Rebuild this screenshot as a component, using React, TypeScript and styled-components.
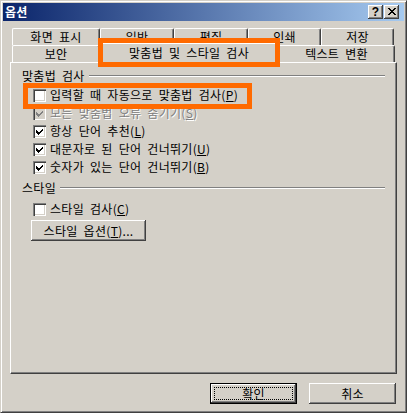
import React from 'react';
import styled, { createGlobalStyle } from 'styled-components';

const GlobalStyle = createGlobalStyle`
  html, body {
    margin: 0;
    padding: 0;
    background: #D4D0C8;
  }
  body {
    font-family: 'Noto Sans CJK KR', 'Noto Sans', sans-serif;
    font-size: 12px;
    color: #000;
    letter-spacing: 0.3px;
    word-spacing: 3px;
  }
`;

const Window = styled.div`
  position: relative;
  width: 407px;
  height: 413px;
  box-sizing: border-box;
  background: #D4D0C8;
  border: 1px solid;
  border-color: #D4D0C8 #404040 #404040 #D4D0C8;
  box-shadow: inset 1px 1px #fff, inset -1px -1px #808080;
  padding: 2px;
  display: flex;
  flex-direction: column;
`;

const TitleBar = styled.div`
  height: 18px;
  display: flex;
  align-items: center;
  padding: 0 5px 0 2px;
  background: linear-gradient(to right, #0A246A, #A6CAF0);
`;

const TitleText = styled.div`
  flex: 1;
  color: #fff;
  font-weight: bold;
  font-size: 12px;
  line-height: 18px;
`;

const CaptionButton = styled.div`
  width: 15px;
  height: 14px;
  box-sizing: border-box;
  margin-left: 1px;
  background: #D4D0C8;
  box-shadow: inset -1px -1px #404040, inset 1px 1px #fff, inset -2px -2px #808080;
  display: flex;
  align-items: center;
  justify-content: center;
  font-family: 'Liberation Sans', Arial, sans-serif;
  font-weight: bold;
  font-size: 12px;
  line-height: 14px;
  padding-bottom: 1px;
`;

const Body = styled.div`
  flex: 1;
  display: flex;
  flex-direction: column;
  padding: 7px 7px 6px;
`;

const TabStrip = styled.div`
  display: flex;
  flex-direction: column;
  margin-left: 2px;
`;

const TabRow = styled.div`
  display: flex;
  height: 17px;
`;

const Tab = styled.div<{ $w: number; $active?: boolean }>`
  width: ${p => p.$w + (p.$active ? 4 : 0)}px;
  height: ${p => (p.$active ? 20 : 17)}px;
  box-sizing: border-box;
  flex-shrink: 0;
  align-self: flex-end;
  margin: ${p => (p.$active ? '0 -2px -1px' : '0')};
  position: relative;
  z-index: ${p => (p.$active ? 2 : 1)};
  background: #D4D0C8;
  border-top: 1px solid #fff;
  border-left: 1px solid #fff;
  border-right: 1px solid #404040;
  box-shadow: inset -1px 0 #808080;
  border-radius: 2px 2px 0 0;
  text-align: center;
  font-size: 12px;
  line-height: ${p => (p.$active ? 17 : 16)}px;
  white-space: nowrap;
`;

const Panel = styled.div`
  height: 312px;
  box-sizing: border-box;
  border: 1px solid;
  border-color: #fff #404040 #404040 #fff;
  box-shadow: inset -1px -1px #808080;
  padding: 6px 11px 0 11px;
  display: flex;
  flex-direction: column;
`;

const GroupHeader = styled.div<{ $top: number }>`
  display: flex;
  align-items: center;
  height: 14px;
  line-height: 14px;
  margin-top: ${p => p.$top}px;
`;

const GroupLine = styled.div`
  flex: 1;
  margin-left: 4px;
  border-top: 1px solid #808080;
  border-bottom: 1px solid #fff;
`;

const GroupBody = styled.div<{ $top: number }>`
  display: flex;
  flex-direction: column;
  align-items: flex-start;
  margin-top: ${p => p.$top}px;
  padding-left: 10px;
`;

const CheckRow = styled.div<{ $disabled?: boolean }>`
  display: flex;
  align-items: center;
  height: 18px;
  padding-left: 1px;
  color: ${p => (p.$disabled ? '#808080' : '#000')};
  text-shadow: ${p => (p.$disabled ? '1px 1px #fff' : 'none')};
`;

const Box = styled.div<{ $disabled?: boolean }>`
  width: 13px;
  height: 13px;
  box-sizing: border-box;
  background: ${p => (p.$disabled ? '#D4D0C8' : '#fff')};
  box-shadow: inset 1px 1px #808080, inset 2px 2px #404040,
    inset -1px -1px #fff, inset -2px -2px #D4D0C8;
  display: flex;
  align-items: center;
  justify-content: center;
`;

const CheckLabel = styled.span`
  margin-left: 4px;
  line-height: 18px;
  white-space: nowrap;
`;

const PushButton = styled.button<{ $w: number; $default?: boolean }>`
  position: relative;
  width: ${p => p.$w}px;
  height: 21px;
  box-sizing: border-box;
  padding: 0;
  margin: 0;
  background: #D4D0C8;
  border: ${p => (p.$default ? '1px solid #000' : 'none')};
  box-shadow: inset -1px -1px #404040, inset 1px 1px #fff, inset -2px -2px #808080;
  font-family: 'Noto Sans CJK KR', 'Noto Sans', sans-serif;
  font-size: 12px;
  letter-spacing: 0.3px;
  word-spacing: 3px;
  line-height: 19px;
  color: #000;
  text-align: center;
  &::after {
    content: '';
    display: ${p => (p.$default ? 'block' : 'none')};
    position: absolute;
    left: 3px;
    top: 3px;
    right: 3px;
    bottom: 3px;
    border: 1px dotted #000;
  }
`;

const StyleButton = styled(PushButton)`
  margin-top: 2px;
  margin-left: -1px;
`;

const ButtonRow = styled.div`
  display: flex;
  justify-content: flex-end;
  gap: 12px;
  margin-top: 9px;
  padding-right: 1px;
`;

const Highlight = styled.div<{ $x: number; $y: number; $w: number; $h: number }>`
  position: absolute;
  left: ${p => p.$x}px;
  top: ${p => p.$y}px;
  width: ${p => p.$w}px;
  height: ${p => p.$h}px;
  box-sizing: border-box;
  border: 5px solid #FF6A00;
  z-index: 10;
`;

const Check = ({ color = '#000' }: { color?: string }) => (
  <svg width="7" height="7" viewBox="0 0 7 7" shapeRendering="crispEdges">
    <path d="M0 2 L2.5 4.5 L7 0 L7 2.5 L2.5 7 L0 4.5 Z" fill={color} />
  </svg>
);

const closeRows = [
  [0, 6], [1, 5], [2, 4], [3, 3], [2, 4], [1, 5], [0, 6],
];

const CloseGlyph = () => (
  <svg width="8" height="7" viewBox="0 0 8 7" shapeRendering="crispEdges">
    {closeRows.map(([a, b], y) => (
      <g key={y}>
        <rect x={a} y={y} width={2} height={1} fill="#000" />
        <rect x={b} y={y} width={2} height={1} fill="#000" />
      </g>
    ))}
  </svg>
);

const Checkbox = ({ checked, disabled, children }: { checked?: boolean; disabled?: boolean; children: React.ReactNode }) => (
  <CheckRow $disabled={disabled}>
    <Box $disabled={disabled}>{checked && <Check color={disabled ? '#808080' : '#000'} />}</Box>
    <CheckLabel>{children}</CheckLabel>
  </CheckRow>
);

const backTabs = [
  { label: '화면 표시', w: 88 },
  { label: '일반', w: 74 },
  { label: '편집', w: 74 },
  { label: '인쇄', w: 73 },
  { label: '저장', w: 73 },
];

const frontTabs = [
  { label: '보안', w: 88 },
  { label: '맞춤법 및 스타일 검사', w: 178, active: true },
  { label: '텍스트 변환', w: 117 },
];

const App = () => {
  return (
    <>
      <GlobalStyle />
      <Window>
        <TitleBar>
          <TitleText>옵션</TitleText>
          <CaptionButton>?</CaptionButton>
          <CaptionButton><CloseGlyph /></CaptionButton>
        </TitleBar>

        <Body>
          <TabStrip>
            <TabRow>
              {backTabs.map(t => <Tab key={t.label} $w={t.w}>{t.label}</Tab>)}
            </TabRow>
            <TabRow>
              {frontTabs.map(t => <Tab key={t.label} $w={t.w} $active={t.active}>{t.label}</Tab>)}
            </TabRow>
          </TabStrip>

          <Panel>
            <GroupHeader $top={0}>맞춤법 검사<GroupLine /></GroupHeader>
            <GroupBody $top={3}>
              <Checkbox>입력할 때 자동으로 맞춤법 검사(<u>P</u>)</Checkbox>
              <Checkbox checked disabled>모든 맞춤법 오류 숨기기(<u>S</u>)</Checkbox>
              <Checkbox checked>항상 단어 추천(<u>L</u>)</Checkbox>
              <Checkbox checked>대문자로 된 단어 건너뛰기(<u>U</u>)</Checkbox>
              <Checkbox checked>숫자가 있는 단어 건너뛰기(<u>B</u>)</Checkbox>
            </GroupBody>

            <GroupHeader $top={5}>스타일<GroupLine /></GroupHeader>
            <GroupBody $top={5}>
              <Checkbox>스타일 검사(<u>C</u>)</Checkbox>
              <StyleButton $w={115}>스타일 옵션(<u>T</u>)...</StyleButton>
            </GroupBody>
          </Panel>

          <ButtonRow>
            <PushButton $w={87} $default>확인</PushButton>
            <PushButton $w={87}>취소</PushButton>
          </ButtonRow>
        </Body>

        <Highlight $x={97} $y={37} $w={182} $h={29} />
        <Highlight $x={22} $y={82} $w={229} $h={26} />
      </Window>
    </>
  );
};

export default App;
